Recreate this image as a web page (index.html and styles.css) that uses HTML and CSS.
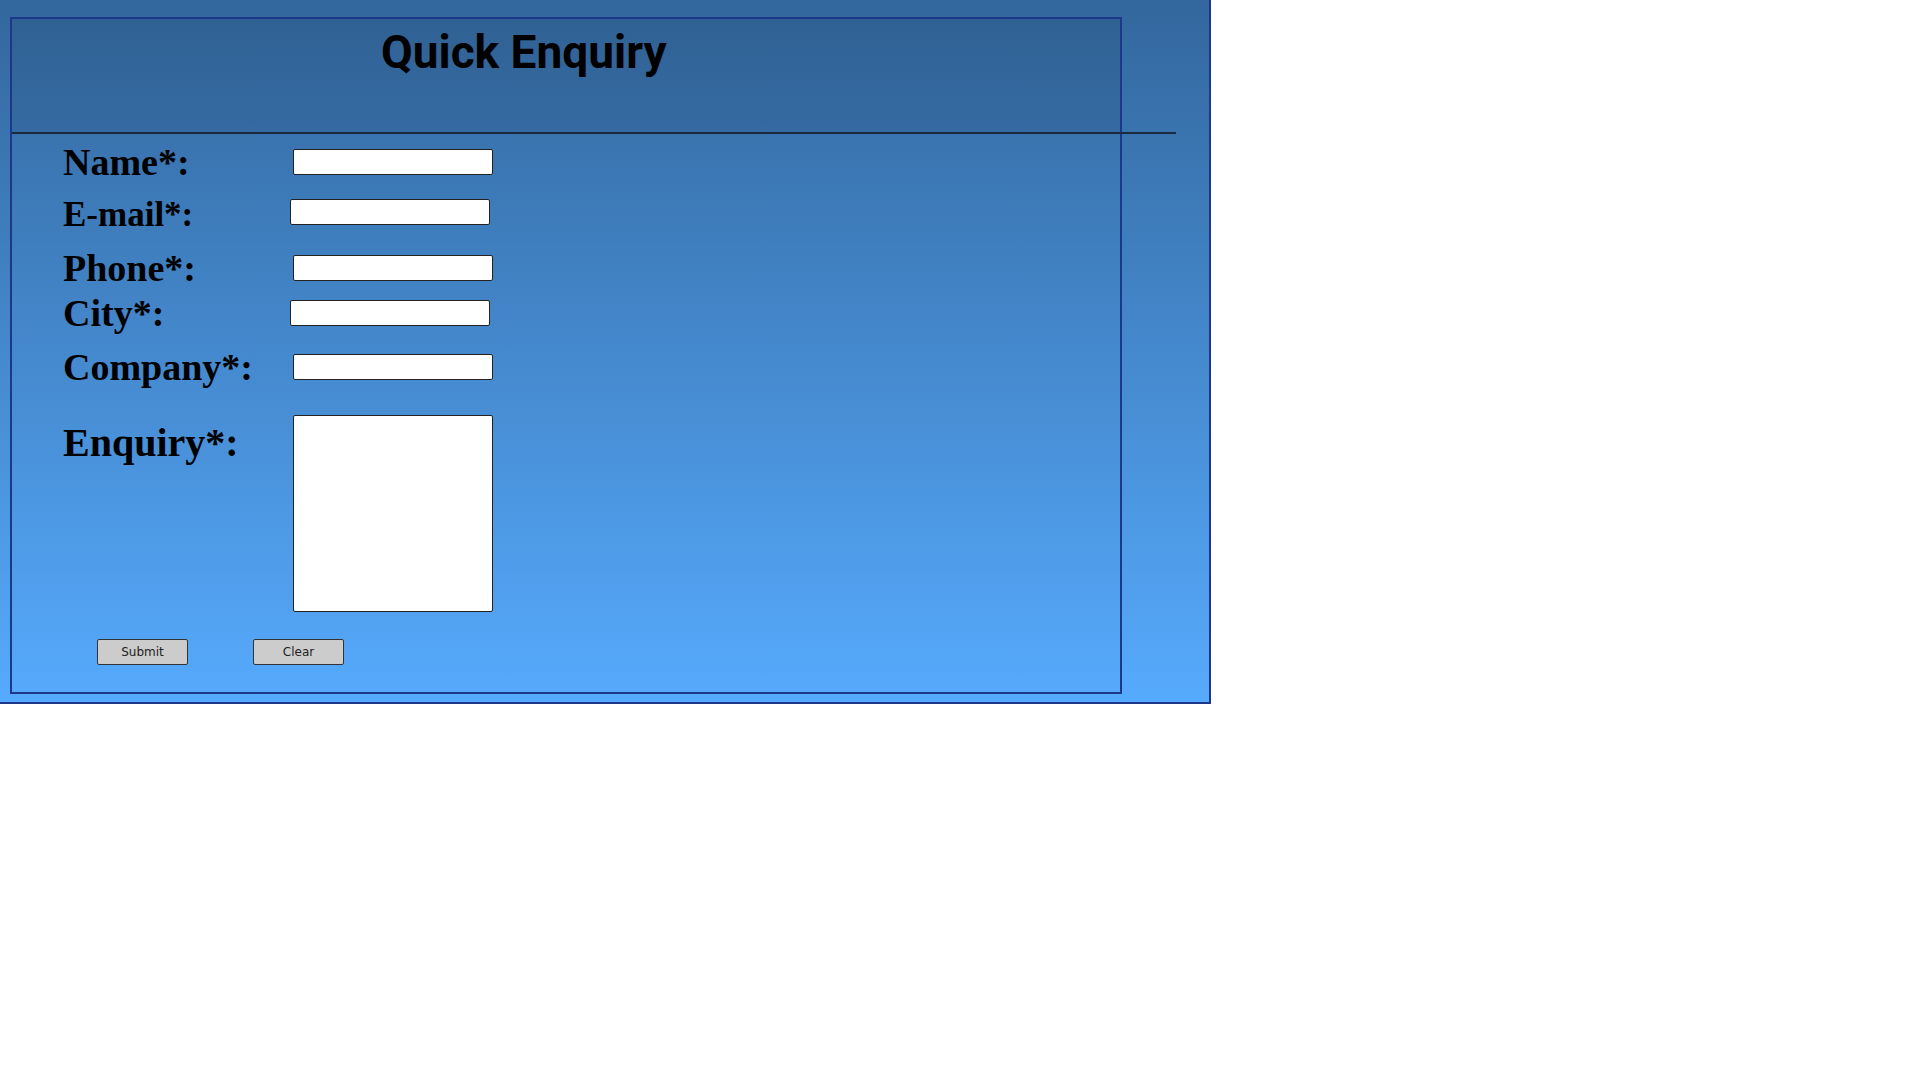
FILE: index.html
```html
<!DOCTYPE html>
<html lang="en">
<head>
<meta charset="utf-8">
<title>Quick Enquiry</title>
<link rel="stylesheet" href="styles.css">
</head>
<body>
<div class="frame">
  <div class="panel">
    <header class="head"><h1 class="title">Quick Enquiry</h1></header>
    <div class="rule"></div>
    <form class="form">
      <div class="row r1"><label class="label" for="f-name">Name*:</label><input class="field" id="f-name" type="text"></div>
      <div class="row r2"><label class="label label-sm" for="f-mail">E-mail*:</label><input class="field shift" id="f-mail" type="text"></div>
      <div class="row r3"><label class="label" for="f-phone">Phone*:</label><input class="field" id="f-phone" type="text"></div>
      <div class="row r4"><label class="label" for="f-city">City*:</label><input class="field shift" id="f-city" type="text"></div>
      <div class="row r5"><label class="label" for="f-company">Company*:</label><input class="field" id="f-company" type="text"></div>
      <div class="row r6"><label class="label label-lg" for="f-enq">Enquiry*:</label><textarea class="field area" id="f-enq"></textarea></div>
      <div class="actions"><button class="btn" type="button">Submit</button><button class="btn" type="reset">Clear</button></div>
    </form>
  </div>
</div>
</body>
</html>
```
FILE: styles.css
```css
* { box-sizing: border-box; }
html, body { margin: 0; background: #fff; }

.frame {
  width: 1211px;
  height: 704px;
  padding: 17px 0 0 10px;
  background: linear-gradient(#33679d, #56aafd);
  border-right: 2px solid #1d3889;
  border-bottom: 2px solid #1d3889;
}

.panel {
  width: 1112px;
  height: 677px;
  border: 2px solid #1d3889;
}

.head {
  height: 113px;
  padding: 6px 0 0 369px;
  background: rgba(0, 0, 0, 0.07);
}

.title {
  margin: 0;
  font: 700 46px/54px Roboto, sans-serif;
  color: #000;
}

.rule {
  width: 1164px;
  height: 2px;
  background: #1a2a40;
}

.form {
  padding: 15px 0 0 51px;
}

.row {
  display: flex;
  align-items: flex-start;
}

.r2 { margin-top: 24px; }
.r3 { margin-top: 30px; }
.r4 { margin-top: 19px; }
.r5 { margin-top: 28px; }
.r6 { margin-top: 35px; }

.label {
  width: 230px;
  height: 26px;
  flex: none;
  font: 700 38px/26px "Liberation Serif", serif;
  color: #000;
  white-space: nowrap;
}

.label-sm {
  font-size: 35px;
  line-height: 32px;
}

.label-lg {
  height: auto;
  font-size: 40px;
  line-height: 55px;
}

.field {
  width: 200px;
  height: 26px;
  margin: 0;
  padding: 0;
  border: 1px solid #222;
  border-radius: 2px;
  background: #fff;
}

.shift { margin-left: -3px; }

.area {
  height: 197px;
  resize: none;
}

.actions {
  display: flex;
  gap: 65px;
  margin-top: 27px;
  padding-left: 34px;
}

.btn {
  width: 91px;
  height: 26px;
  padding: 0;
  background: #ccc;
  border: 1px solid #333;
  border-radius: 2px;
  font: 12px "DejaVu Sans", sans-serif;
  color: #222;
}
```
